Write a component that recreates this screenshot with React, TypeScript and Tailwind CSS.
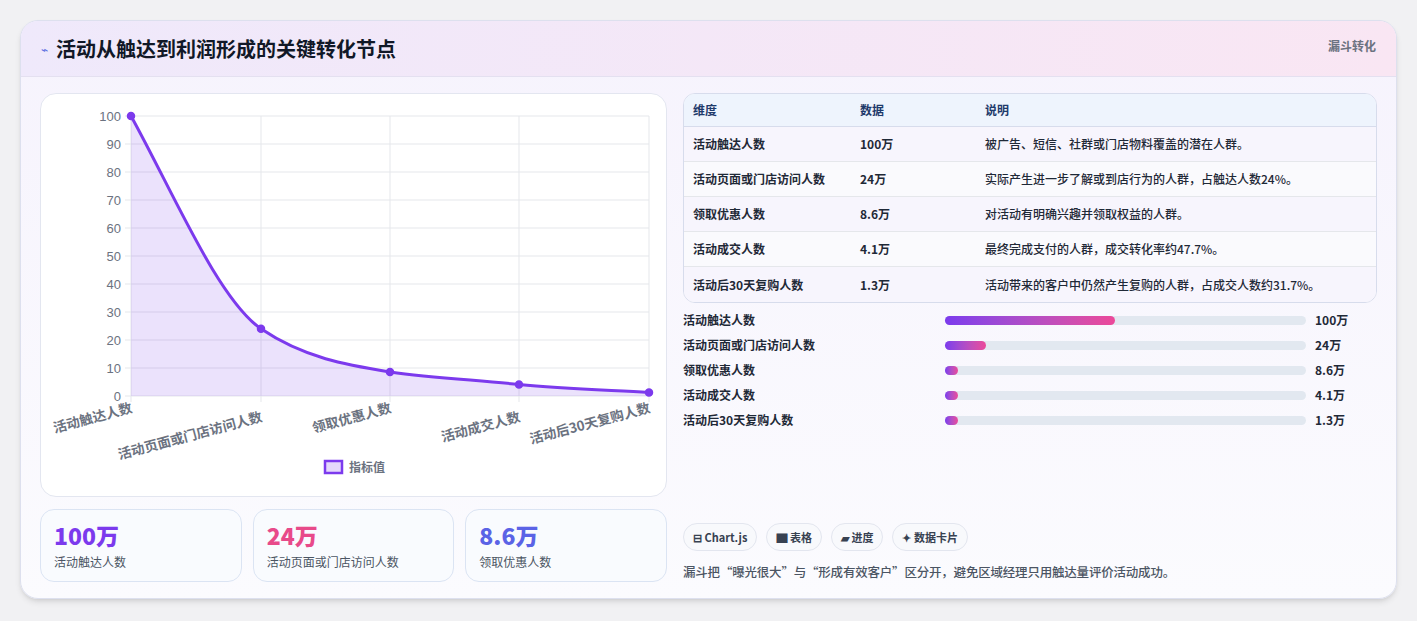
const font = { fontFamily: '"Noto Sans CJK SC", "Noto Sans", sans-serif' };

const rows = [
  ["活动触达人数", "100万", "被广告、短信、社群或门店物料覆盖的潜在人群。"],
  ["活动页面或门店访问人数", "24万", "实际产生进一步了解或到店行为的人群，占触达人数24%。"],
  ["领取优惠人数", "8.6万", "对活动有明确兴趣并领取权益的人群。"],
  ["活动成交人数", "4.1万", "最终完成支付的人群，成交转化率约47.7%。"],
  ["活动后30天复购人数", "1.3万", "活动带来的客户中仍然产生复购的人群，占成交人数约31.7%。"],
];

const bars = [
  ["活动触达人数", "100万", 170],
  ["活动页面或门店访问人数", "24万", 41],
  ["领取优惠人数", "8.6万", 13],
  ["活动成交人数", "4.1万", 13],
  ["活动后30天复购人数", "1.3万", 13],
] as const;

const pts = [
  [90, 22],
  [220, 234.8],
  [349, 277.9],
  [478, 290.5],
  [608, 298.4],
];
const xLabels = ["活动触达人数", "活动页面或门店访问人数", "领取优惠人数", "活动成交人数", "活动后30天复购人数"];
const curve = "M90,22 C133,100 177,205 220,234.8 C263,264 306,271 349,277.9 C392,284 435,286 478,290.5 C521,295 565,296 608,298.4";

function Chart() {
  return (
    <svg width="627" height="402" className="block">
      {Array.from({ length: 11 }).map((_, i) => {
        const y = 22 + i * 28;
        return (
          <g key={i}>
            <line x1="84" x2="608" y1={y} y2={y} stroke="#e5e7eb" />
            <text x="80" y={y + 5} textAnchor="end" fontSize="13" fill="#6b7280" fontFamily="Liberation Sans, sans-serif">
              {100 - i * 10}
            </text>
          </g>
        );
      })}
      {pts.map(([x], i) => (
        <line key={i} x1={x} x2={x} y1="22" y2="308" stroke="#e5e7eb" />
      ))}
      <path d={curve + " L608,302 L90,302 Z"} fill="rgba(124,58,237,0.15)" />
      <path d={curve} fill="none" stroke="#7c3aed" strokeWidth="3" />
      {pts.map(([x, y], i) => (
        <circle key={i} cx={x} cy={y} r="3.5" fill="#7c3aed" stroke="#7c3aed" strokeWidth="1.5" />
      ))}
      {xLabels.map((l, i) => {
        const x = pts[i][0] + 2;
        const y = i % 2 === 1 ? 327 : 318;
        return (
          <text key={l} x={x} y={y} textAnchor="end" fontSize="13.5" fill="#6b7280" fontWeight="600" transform={`rotate(-15 ${x} ${y})`} style={font}>
            {l}
          </text>
        );
      })}
      <rect x="284" y="367" width="17" height="12" fill="rgba(124,58,237,0.2)" stroke="#7c3aed" strokeWidth="2.5" />
      <text x="308" y="378" fontSize="12" fill="#6b7280" fontWeight="600" style={font}>
        指标值
      </text>
    </svg>
  );
}

export default function App() {
  return (
    <div className="w-[1417px] h-[621px] bg-[#f1f1f3] pt-[20px] pl-[20px]" style={font}>
      <div className="w-[1377px] h-[579px] rounded-[18px] bg-gradient-to-b from-[#f6f3fd] to-[#fbfbfe] border border-[#dde0ee] shadow-md overflow-hidden flex flex-col">
        <div className="h-[56px] shrink-0 flex items-start justify-between px-[20px] bg-gradient-to-r from-[#efe9fb] to-[#f9e6f3] border-b border-[#e4e0f0]">
          <div className="flex items-center gap-[8px] h-full">
            <span className="text-[#5b6ee1] text-[12px]">⌁</span>
            <span className="text-[20px] font-bold text-[#111827]">活动从触达到利润形成的关键转化节点</span>
          </div>
          <span className="text-[12px] font-bold text-[#6b7280] mt-[16px]">漏斗转化</span>
        </div>
        <div className="flex gap-[16px] px-[19px] pt-[16px]">
          <div className="w-[627px] flex flex-col gap-[12px]">
            <div className="bg-white rounded-[16px] border border-[#e3e6f0] h-[404px]">
              <Chart />
            </div>
            <div className="grid grid-cols-3 gap-[11px]">
              {[
                ["100万", "text-[#7c3aed]", "活动触达人数"],
                ["24万", "text-[#e84a8a]", "活动页面或门店访问人数"],
                ["8.6万", "text-[#5b63e6]", "领取优惠人数"],
              ].map(([v, c, l]) => (
                <div key={l} className="h-[73px] rounded-[14px] border border-[#dbe4f3] bg-[#f9fbfe] px-[13px] pt-[10px]">
                  <div className={`text-[23px] font-extrabold leading-[30px] ${c}`}>{v}</div>
                  <div className="text-[12px] text-[#4b5563] mt-[3px]">{l}</div>
                </div>
              ))}
            </div>
          </div>
          <div className="flex-1 flex flex-col">
            <div className="rounded-[12px] border border-[#d7dcec] overflow-hidden bg-white">
              <div className="flex h-[33px] items-center bg-[#eef4fd] text-[12px] font-bold text-[#1e3a6b] border-b border-[#d7dcec]">
                <span className="w-[176px] pl-[9px]">维度</span>
                <span className="w-[125px]">数据</span>
                <span>说明</span>
              </div>
              {rows.map((r, i) => (
                <div key={i} className={`flex h-[35px] items-center text-[12px] text-[#1f2937] font-semibold ${i < 4 ? "border-b border-[#e5e7eb]" : ""} ${i % 2 ? "bg-[#fafafd]" : "bg-[#f7f5fd]"}`}>
                  <span className="w-[176px] pl-[9px]">{r[0]}</span>
                  <span className="w-[125px]">{r[1]}</span>
                  <span className="font-medium">{r[2]}</span>
                </div>
              ))}
            </div>
            <div className="flex flex-col gap-[7px] mt-[8px]">
              {bars.map(([l, v, w]) => (
                <div key={l} className="flex items-center h-[18px] text-[12px] font-semibold text-[#1f2937]">
                  <span className="w-[262px]">{l}</span>
                  <div className="w-[361px] h-[9px] rounded-full bg-[#e2e8f0]">
                    <div className="h-full rounded-full bg-gradient-to-r from-[#7c3aed] to-[#ec4899]" style={{ width: w }} />
                  </div>
                  <span className="ml-[9px] font-bold">{v}</span>
                </div>
              ))}
            </div>
            <div className="flex gap-[9px] mt-[94px]">
              {["⊟ Chart.js", "▇ 表格", "▰ 进度", "✦ 数据卡片"].map((t) => (
                <span key={t} className="h-[28px] px-[9px] rounded-full border border-[#e3e6ef] bg-[#f8f9fc] text-[11px] font-bold text-[#374151] flex items-center">
                  {t}
                </span>
              ))}
            </div>
            <div className="mt-[12px] text-[12.5px] tracking-[-0.2px] text-[#4b5563] font-medium">漏斗把“曝光很大”与“形成有效客户”区分开，避免区域经理只用触达量评价活动成功。</div>
          </div>
        </div>
      </div>
    </div>
  );
}
